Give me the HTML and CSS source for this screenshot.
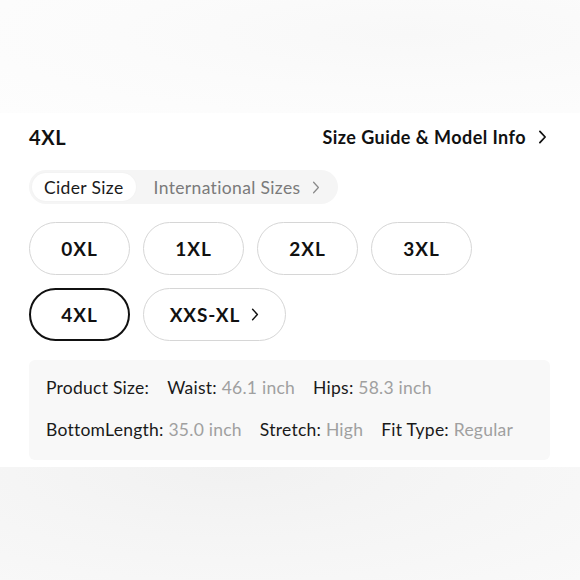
FILE: index.html
```html
<!DOCTYPE html>
<html>
<head>
<meta charset="utf-8">
<link rel="stylesheet" href="styles.css">
</head>
<body>
<div class="top-fade"></div>
<section class="panel">
  <div class="title-row">
    <h2 class="selected">4XL</h2>
    <a class="guide">Size Guide &amp; Model Info
      <svg class="chev" viewBox="0 0 10 16" width="9" height="14"><polyline points="2,1.5 8,8 2,14.5" fill="none" stroke="#111" stroke-width="2" stroke-linecap="round" stroke-linejoin="round"/></svg>
    </a>
  </div>
  <div class="tabs">
    <span class="tab active">Cider Size</span>
    <span class="tab">International Sizes
      <svg class="chev" viewBox="0 0 10 16" width="8" height="13"><polyline points="2,1.5 8,8 2,14.5" fill="none" stroke="#8a8a8a" stroke-width="1.6" stroke-linecap="round" stroke-linejoin="round"/></svg>
    </span>
  </div>
  <div class="sizes">
    <button class="size">0XL</button>
    <button class="size">1XL</button>
    <button class="size">2XL</button>
    <button class="size">3XL</button>
    <button class="size selected-size">4XL</button>
    <button class="size wide">XXS-XL
      <svg class="chev" viewBox="0 0 10 16" width="8" height="13"><polyline points="2,1.5 8,8 2,14.5" fill="none" stroke="#111" stroke-width="1.8" stroke-linecap="round" stroke-linejoin="round"/></svg>
    </button>
  </div>
  <div class="info">
    <div class="line">
      <span class="k">Product Size:</span>
      <span class="k">Waist: <span class="v">46.1 inch</span></span>
      <span class="k">Hips: <span class="v">58.3 inch</span></span>
    </div>
    <div class="line">
      <span class="k">BottomLength: <span class="v">35.0 inch</span></span>
      <span class="k">Stretch: <span class="v">High</span></span>
      <span class="k">Fit Type: <span class="v">Regular</span></span>
    </div>
  </div>
</section>
<div class="bottom-fade"></div>
</body>
</html>
```

FILE: styles.css
```css
html, body {
  margin: 0;
  padding: 0;
  height: 100%;
}
body {
  font-family: "Lato", "Noto Sans", sans-serif;
  color: #111;
  background: #f8f8f8;
  display: flex;
  flex-direction: column;
}
.top-fade {
  height: 113px;
  background: radial-gradient(ellipse at 70% 30%, #f8f8f8 0%, #fbfbfb 50%, #fdfdfd 100%);
}
.panel {
  background: #fff;
  padding: 12px 30px 7px 29px;
}
.title-row {
  display: flex;
  justify-content: space-between;
  align-items: center;
  height: 24px;
}
.selected {
  margin: 0;
  font-size: 20px;
  font-weight: 700;
  letter-spacing: 0.6px;
}
.guide {
  display: flex;
  align-items: center;
  gap: 12px;
  font-size: 18px;
  font-weight: 700;
  letter-spacing: 0.45px;
  color: #111;
  padding-right: 3px;
}
.chev { display: block; }
.tabs {
  margin-top: 21px;
  display: inline-flex;
  align-items: center;
  height: 34px;
  padding: 0 6px 0 3px;
  background: #f5f5f5;
  border-radius: 17px;
  gap: 6px;
}
.tab {
  display: flex;
  align-items: center;
  gap: 12px;
  height: 28px;
  padding: 0 12px;
  font-size: 17.5px;
  letter-spacing: 0.35px;
  color: #7a7a7a;
}
.tab.active {
  background: #fff;
  color: #1a1a1a;
  border-radius: 14px;
  box-shadow: 0 0 2px rgba(0,0,0,0.04);
}
.sizes {
  margin-top: 18px;
  display: flex;
  flex-wrap: wrap;
  gap: 13px;
  width: 460px;
}
.size {
  width: 101px;
  height: 53px;
  border: 1.5px solid #d6d6d6;
  border-radius: 27px;
  background: #fff;
  font-family: inherit;
  font-size: 19px;
  font-weight: 700;
  letter-spacing: 0.9px;
  color: #111;
  display: flex;
  align-items: center;
  justify-content: center;
  gap: 11px;
  padding: 0;
}
.selected-size {
  border: 2.5px solid #111;
}
.size.wide {
  width: 143px;
}
.info {
  margin-top: 19px;
  background: #f8f8f8;
  border-radius: 6px;
  padding: 17px 17px 19px;
  display: flex;
  flex-direction: column;
  gap: 20px;
}
.line {
  display: flex;
  gap: 18px;
  font-size: 17.5px;
  letter-spacing: 0.25px;
  line-height: 22px;
  color: #1a1a1a;
}
.v { color: #a0a0a0; }
.bottom-fade {
  flex: 1;
  background: radial-gradient(ellipse at 40% 0%, #f1f1f1 0%, #f5f5f5 45%, #f9f9f9 100%);
}
```
